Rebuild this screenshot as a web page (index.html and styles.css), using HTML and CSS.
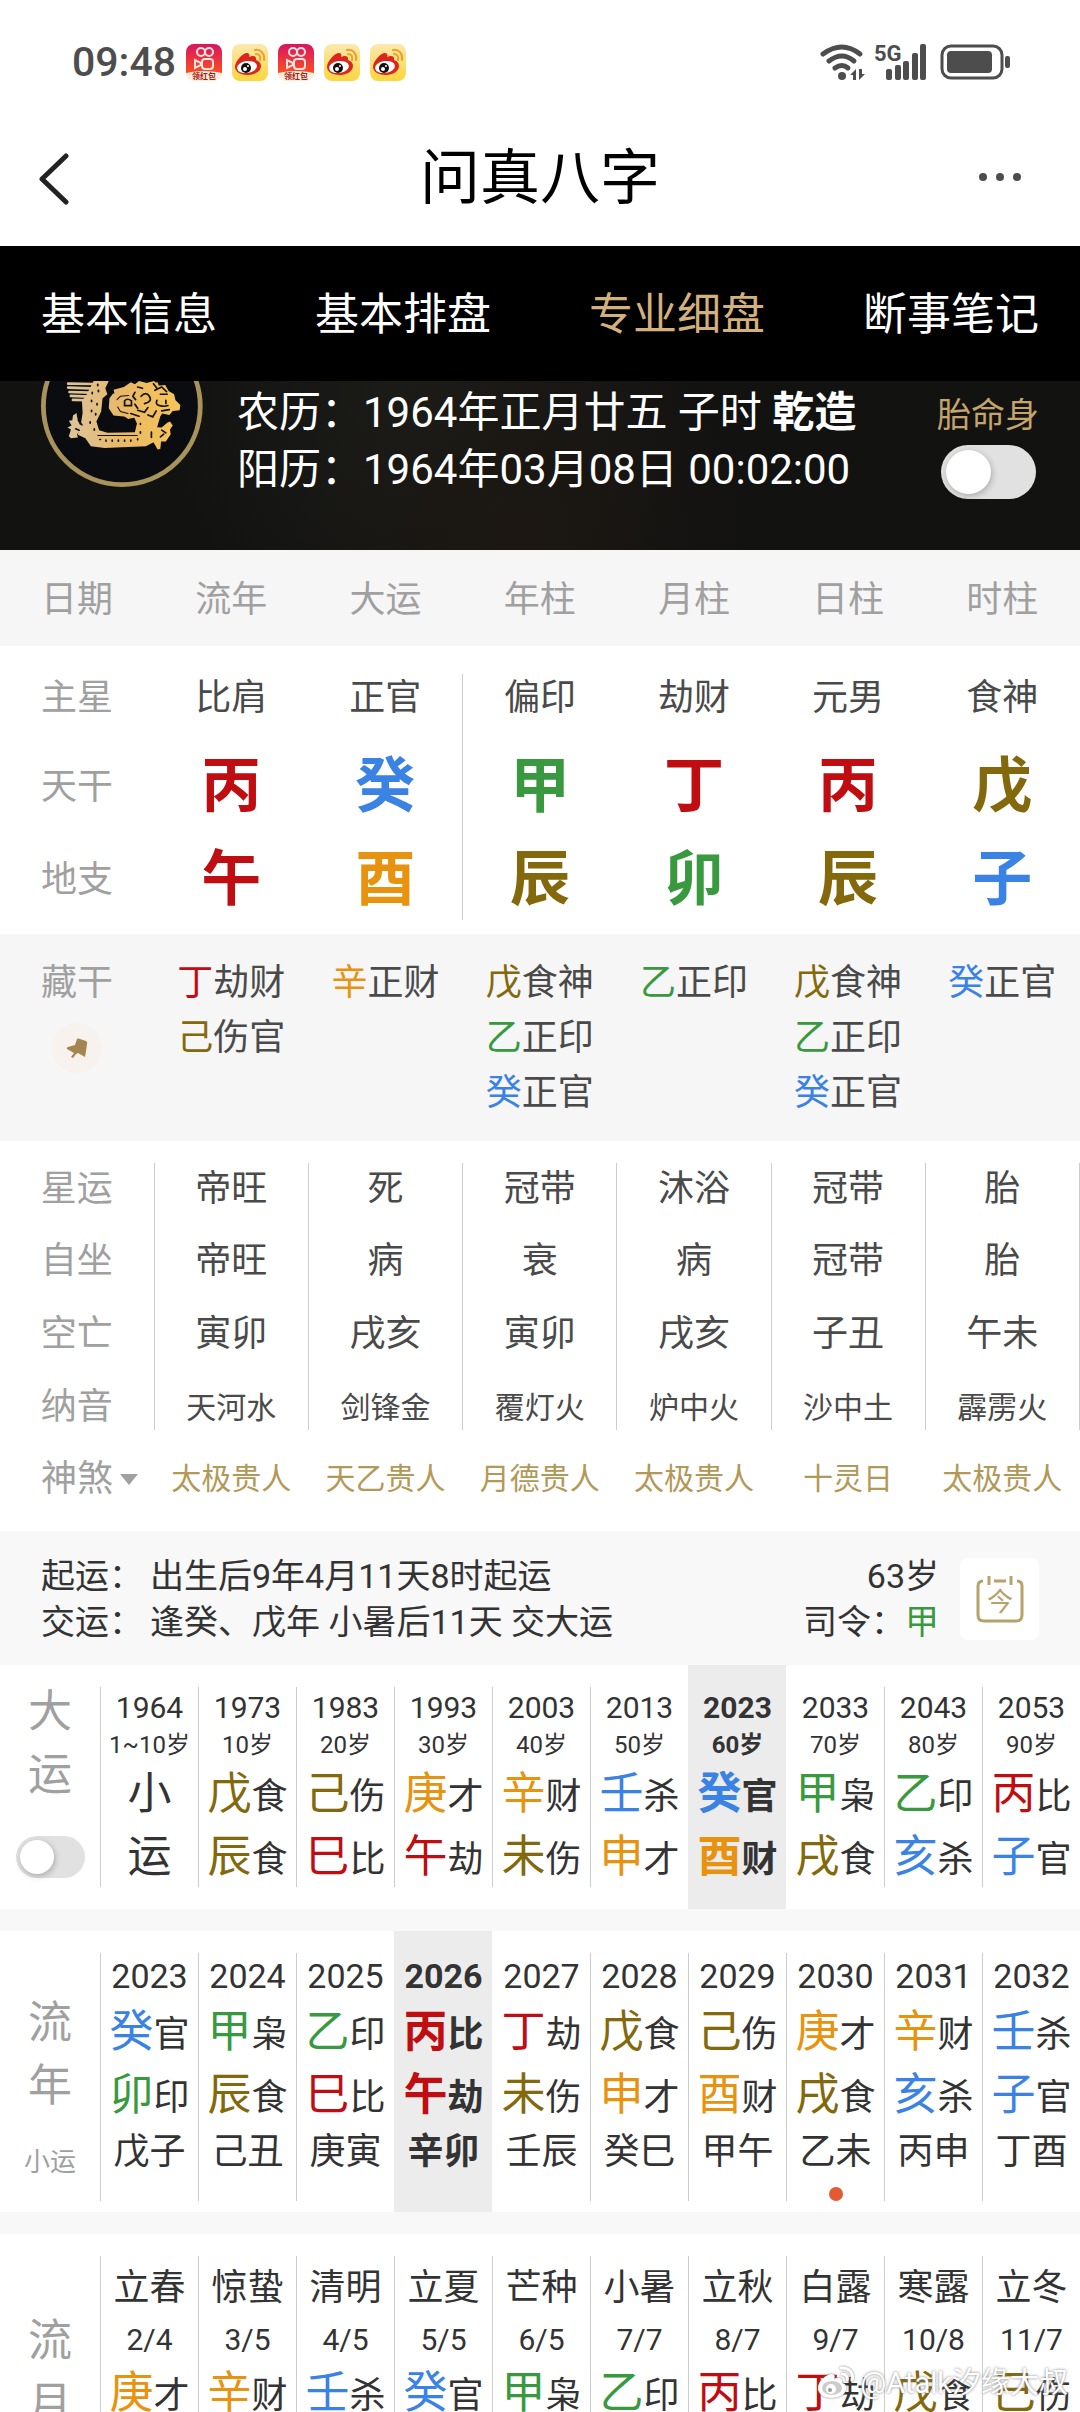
FILE: index.html
```html
<!DOCTYPE html>
<html lang="zh-CN">
<head>
    <meta charset="UTF-8">
    <meta name="viewport" content="width=device-width, initial-scale=1.0">
    <title>问真八字</title>
    <link rel="stylesheet" href="styles.css">
</head>
<body>
    <svg width="0" height="0" class="defs" aria-hidden="true">
        <defs>
            <linearGradient id="ksBg" x1="0" y1="0" x2="0" y2="1">
                <stop offset="0" stop-color="#d81560"/>
                <stop offset="1" stop-color="#fb4f22"/>
            </linearGradient>
            <linearGradient id="wbBg" x1="0" y1="0" x2="0" y2="1">
                <stop offset="0" stop-color="#fbe9ae"/>
                <stop offset="1" stop-color="#fdd53c"/>
            </linearGradient>
            <symbol id="kuaishou" viewBox="0 0 36 37">
                <rect width="36" height="37" rx="8" fill="#fdeedb"/>
                <path d="M0 29V8a8 8 0 0 1 8-8h20a8 8 0 0 1 8 8v21Q18 25 0 29z" fill="url(#ksBg)"/>
                <g fill="none" stroke="#ffe4e0" stroke-width="2">
                    <circle cx="15" cy="8" r="4"/>
                    <circle cx="23" cy="8" r="4"/>
                    <rect x="16" y="15" width="11" height="10" rx="3"/>
                    <path d="M15 19l-6-3v8l6-3z"/>
                </g>
                <text x="18" y="35" class="ks-text">领红包</text>
            </symbol>
            <symbol id="weibo" viewBox="0 0 36 37">
                <rect width="36" height="37" rx="8" fill="url(#wbBg)"/>
                <path d="M3 23c0-6 8-14 12-14 2 0 3 2 2 4 4-2 8-1 7 3 3 1 5 3 5 6 0 5-6 9-13 9S3 28 3 23z" fill="#dc251c"/>
                <ellipse cx="15" cy="23" rx="10" ry="6" fill="#fff" transform="rotate(-8 15 23)"/>
                <circle cx="14" cy="24" r="5" fill="#111"/>
                <circle cx="13" cy="25" r="2" fill="#fff"/>
                <circle cx="16" cy="22" r="1" fill="#fff"/>
                <path d="M23 6c6-1 10 4 9 10M24 10c3 0 5 2 4 6" fill="none" stroke="#eda02b" stroke-width="2" stroke-linecap="round"/>
            </symbol>
        </defs>
    </svg>

    <div class="status">
        <span class="time">09:48</span>
        <div class="apps">
            <svg width="36" height="37"><use href="#kuaishou"/></svg>
            <svg width="36" height="37"><use href="#weibo"/></svg>
            <svg width="36" height="37"><use href="#kuaishou"/></svg>
            <svg width="36" height="37"><use href="#weibo"/></svg>
            <svg width="36" height="37"><use href="#weibo"/></svg>
        </div>
        <svg class="signals" width="190" height="36" viewBox="0 0 190 36">
            <g fill="none" stroke="#4d4d4d" stroke-width="5" stroke-linecap="round">
                <path d="M3 10Q22-4 40 10"/>
                <path d="M9 17Q22 7 34 17"/>
                <path d="M15 24Q22 19 28 24"/>
            </g>
            <circle cx="22" cy="32" r="4" fill="#4d4d4d"/>
            <path d="M30 31l6-6v11h-3v-5zM45 30l-6 6V25h3v5z" fill="#4d4d4d"/>
            <text x="54" y="17" class="net">5G</text>
            <g fill="#4d4d4d">
                <rect x="66" y="25" width="6" height="11" rx="2"/>
                <rect x="75" y="21" width="6" height="15" rx="2"/>
                <rect x="83" y="17" width="6" height="19" rx="2"/>
                <rect x="92" y="9" width="6" height="27" rx="2"/>
                <rect x="100" y="0" width="6" height="36" rx="2"/>
                <rect x="127" y="7" width="45" height="22" rx="4"/>
                <rect x="185" y="12" width="5" height="12" rx="2"/>
            </g>
            <rect x="122" y="2" width="60" height="32" rx="9" fill="none" stroke="#4d4d4d" stroke-width="3"/>
        </svg>
    </div>

    <header class="titlebar">
        <button class="icon-btn" aria-label="返回">
            <svg width="32" height="52" viewBox="0 0 32 52"><path d="M28 3L4 26l24 23" fill="none" stroke="#222" stroke-width="5" stroke-linecap="round" stroke-linejoin="round"/></svg>
        </button>
        <h1>问真八字</h1>
        <button class="icon-btn more-btn" aria-label="更多">
            <svg width="44" height="10" viewBox="0 0 44 10" fill="#4d4d4d"><circle cx="5" cy="5" r="4"/><circle cx="22" cy="5" r="4"/><circle cx="39" cy="5" r="4"/></svg>
        </button>
    </header>

    <nav class="tabs">
        <a href="#info">基本信息</a>
        <a href="#basic">基本排盘</a>
        <a href="#pro" class="current">专业细盘</a>
        <a href="#notes">断事笔记</a>
    </nav>

    <section class="banner">
        <svg class="medal" width="162" height="106" viewBox="119 422 471 319" preserveAspectRatio="none">
            <defs>
                <linearGradient id="gold" x1="190" y1="0" x2="520" y2="0" gradientUnits="userSpaceOnUse">
                    <stop offset="0" stop-color="#dcc5a0"/>
                    <stop offset="0.5" stop-color="#e8b867"/>
                    <stop offset="1" stop-color="#f6c557"/>
                </linearGradient>
            </defs>
            <ellipse cx="354" cy="498" rx="228" ry="236" fill="#0b0c10" stroke="#a8935a" stroke-width="14"/>
            <g fill="none" stroke="url(#gold)" stroke-linecap="round">
                <path d="M198 430l70 1M198 442l66 2M202 455l60 2M206 467l54 2M212 479l46 1" stroke-width="8"/>
            </g>
            <g fill="url(#gold)">
                <!-- back, belly and hind leg -->
                <path d="M272 422h44l-10 22 6 18-14 12-4 40-14 30 8 26 24 8 80-2 6-26-8-18-60-6-14-22 2-30 10-14 30-8 40-16 60-10 20 60-20 70-12 50-22 12-120 6-40-6-16-24-22-10 8-26 6-40-2-36 14-20z"/>
                <!-- head and mane -->
                <path d="M330 448l30-8 20-14 12 6 12-10 22 6 22-6 12 14 20-2 10 18 16 10 4 18 14 14-2 16-20 2-10 12-20-4-12 14-18-4-8 10-16-8-14 10-12-10-20 4-26-20z"/>
                <path d="M262 560l-30-6-6-14-4-22-10 8-2 14-10 2 8 14-12 6 10 6-6 20 6 6 20-2-2-10 10-12 20 4z"/>
                <path d="M430 560l40 2 16-14 8-4 8 12-8 12 2 14-14 22-14 0-2 22-8 2-12-22-20 0z"/>
            </g>
            <g fill="none" stroke="#15120c" stroke-width="5" stroke-linecap="round">
                <path d="M284 432v4M268 456v4M286 450v4M266 480v4M282 490v4M266 510v4M278 520v4M262 545v4M274 566v4M290 598h2M308 600v3M326 600v3M344 600v3M362 600v3M380 600v3M400 596v3M408 575v4M408 550v3"/>
                <path d="M284 586h115M340 478l10-10 24-2M342 500l8 14 22 6" stroke-width="3"/>
                <path d="M410 468q14-16 24 0t-14 22M450 450l20-10 14 14M456 480q-6 12 8 16t24 0M466 462h20M482 480v10M362 482q8-10 20 0v14h-20zM400 510l20 6 10-14M430 524l14 6 10-18M380 520l24 8M446 430l10 14M400 440l14 4M392 456l-6 12 8 10M392 492l8 12M470 512l22-4"/>
                <path d="M228 540l10 14M220 566l10 4M470 570l12 8M466 590l10-8M440 576v16"/>
            </g>
        </svg>
        <div class="birth">
            <p>农历：1964年正月廿五 子时 <b>乾造</b></p>
            <p>阳历：1964年03月08日 00:02:00</p>
        </div>
        <label class="palace">胎命身<input type="checkbox" class="switch"></label>
    </section>

    <table class="pillars">
        <thead>
            <tr><th>日期</th><th>流年</th><th>大运</th><th>年柱</th><th>月柱</th><th>日柱</th><th>时柱</th></tr>
        </thead>
        <tbody class="stems">
            <tr class="star"><th>主星</th><td>比肩</td><td>正官</td><td>偏印</td><td>劫财</td><td>元男</td><td>食神</td></tr>
            <tr class="gan"><th>天干</th><td class="fire">丙</td><td class="water">癸</td><td class="wood">甲</td><td class="fire">丁</td><td class="fire">丙</td><td class="earth">戊</td></tr>
            <tr class="zhi"><th>地支</th><td class="fire">午</td><td class="metal">酉</td><td class="earth">辰</td><td class="wood">卯</td><td class="earth">辰</td><td class="water">子</td></tr>
        </tbody>
        <tbody class="hidden-stems">
            <tr>
                <th>藏干
                    <button class="pin" aria-label="固定">
                        <svg width="22" height="20" viewBox="0 0 22 20" fill="#a5854f"><path d="M11 1q1-1 3 0l6 2q2 1 1 3l-1 7-1 6-7-4-2 1-3 4-2-1 3-4-7-4q-1-1 1-2l7-2z"/></svg>
                    </button>
                </th>
                <td><span class="fire">丁</span>劫财<br><span class="earth">己</span>伤官</td>
                <td><span class="metal">辛</span>正财</td>
                <td><span class="earth">戊</span>食神<br><span class="wood">乙</span>正印<br><span class="water">癸</span>正官</td>
                <td><span class="wood">乙</span>正印</td>
                <td><span class="earth">戊</span>食神<br><span class="wood">乙</span>正印<br><span class="water">癸</span>正官</td>
                <td><span class="water">癸</span>正官</td>
            </tr>
        </tbody>
        <tbody class="details">
            <tr class="first"><th>星运</th><td>帝旺</td><td>死</td><td>冠带</td><td>沐浴</td><td>冠带</td><td>胎</td></tr>
            <tr><th>自坐</th><td>帝旺</td><td>病</td><td>衰</td><td>病</td><td>冠带</td><td>胎</td></tr>
            <tr><th>空亡</th><td>寅卯</td><td>戌亥</td><td>寅卯</td><td>戌亥</td><td>子丑</td><td>午未</td></tr>
            <tr class="nayin"><th>纳音</th><td>天河水</td><td>剑锋金</td><td>覆灯火</td><td>炉中火</td><td>沙中土</td><td>霹雳火</td></tr>
            <tr class="shensha"><th><button class="more">神煞</button></th><td>太极贵人</td><td>天乙贵人</td><td>月德贵人</td><td>太极贵人</td><td>十灵日</td><td>太极贵人</td></tr>
        </tbody>
    </table>

    <section class="summary">
        <dl>
            <div><dt>起运：</dt><dd>出生后9年4月11天8时起运</dd></div>
            <div><dt>交运：</dt><dd>逢癸、戊年 小暑后11天 交大运</dd></div>
        </dl>
        <p class="age">63岁<br>司令：<span class="wood">甲</span></p>
        <button class="today" aria-label="今天">
            <svg width="48" height="48" viewBox="0 0 48 48">
                <path d="M7 6Q2 6 2 11V40Q2 46 8 46H40Q46 46 46 40V11Q46 6 41 6M18 6H30M13 1V10M35 1V10" fill="none" stroke="#b5a36c" stroke-width="3"/>
                <text x="24" y="36">今</text>
            </svg>
        </button>
    </section>

    <section class="luck dayun">
        <div class="side"><span>大</span><span>运</span><input type="checkbox" class="switch small" aria-label="大运"></div>
        <button class="col"><span class="year">1964</span><span class="old">1~10岁</span><span class="gz"><b>小</b></span><span class="gz"><b>运</b></span></button>
        <button class="col"><span class="year">1973</span><span class="old">10岁</span><span class="gz"><b class="earth">戊</b>食</span><span class="gz"><b class="earth">辰</b>食</span></button>
        <button class="col"><span class="year">1983</span><span class="old">20岁</span><span class="gz"><b class="earth">己</b>伤</span><span class="gz"><b class="fire">巳</b>比</span></button>
        <button class="col"><span class="year">1993</span><span class="old">30岁</span><span class="gz"><b class="metal">庚</b>才</span><span class="gz"><b class="fire">午</b>劫</span></button>
        <button class="col"><span class="year">2003</span><span class="old">40岁</span><span class="gz"><b class="metal">辛</b>财</span><span class="gz"><b class="earth">未</b>伤</span></button>
        <button class="col"><span class="year">2013</span><span class="old">50岁</span><span class="gz"><b class="water">壬</b>杀</span><span class="gz"><b class="metal">申</b>才</span></button>
        <button class="col active"><span class="year">2023</span><span class="old">60岁</span><span class="gz"><b class="water">癸</b>官</span><span class="gz"><b class="metal">酉</b>财</span></button>
        <button class="col"><span class="year">2033</span><span class="old">70岁</span><span class="gz"><b class="wood">甲</b>枭</span><span class="gz"><b class="earth">戌</b>食</span></button>
        <button class="col"><span class="year">2043</span><span class="old">80岁</span><span class="gz"><b class="wood">乙</b>印</span><span class="gz"><b class="water">亥</b>杀</span></button>
        <button class="col"><span class="year">2053</span><span class="old">90岁</span><span class="gz"><b class="fire">丙</b>比</span><span class="gz"><b class="water">子</b>官</span></button>
    </section>

    <section class="luck liunian">
        <div class="side"><span>流</span><span>年</span><small>小运</small></div>
        <button class="col"><span class="year">2023</span><span class="gz"><b class="water">癸</b>官</span><span class="gz"><b class="wood">卯</b>印</span><span class="minor">戊子</span></button>
        <button class="col"><span class="year">2024</span><span class="gz"><b class="wood">甲</b>枭</span><span class="gz"><b class="earth">辰</b>食</span><span class="minor">己丑</span></button>
        <button class="col"><span class="year">2025</span><span class="gz"><b class="wood">乙</b>印</span><span class="gz"><b class="fire">巳</b>比</span><span class="minor">庚寅</span></button>
        <button class="col active"><span class="year">2026</span><span class="gz"><b class="fire">丙</b>比</span><span class="gz"><b class="fire">午</b>劫</span><span class="minor">辛卯</span></button>
        <button class="col"><span class="year">2027</span><span class="gz"><b class="fire">丁</b>劫</span><span class="gz"><b class="earth">未</b>伤</span><span class="minor">壬辰</span></button>
        <button class="col"><span class="year">2028</span><span class="gz"><b class="earth">戊</b>食</span><span class="gz"><b class="metal">申</b>才</span><span class="minor">癸巳</span></button>
        <button class="col"><span class="year">2029</span><span class="gz"><b class="earth">己</b>伤</span><span class="gz"><b class="metal">酉</b>财</span><span class="minor">甲午</span></button>
        <button class="col marked"><span class="year">2030</span><span class="gz"><b class="metal">庚</b>才</span><span class="gz"><b class="earth">戌</b>食</span><span class="minor">乙未</span></button>
        <button class="col"><span class="year">2031</span><span class="gz"><b class="metal">辛</b>财</span><span class="gz"><b class="water">亥</b>杀</span><span class="minor">丙申</span></button>
        <button class="col"><span class="year">2032</span><span class="gz"><b class="water">壬</b>杀</span><span class="gz"><b class="water">子</b>官</span><span class="minor">丁酉</span></button>
    </section>

    <section class="luck liuyue">
        <div class="side"><span>流</span><span>月</span></div>
        <button class="col"><span class="term">立春</span><span class="date">2/4</span><span class="gz"><b class="metal">庚</b>才</span></button>
        <button class="col"><span class="term">惊蛰</span><span class="date">3/5</span><span class="gz"><b class="metal">辛</b>财</span></button>
        <button class="col"><span class="term">清明</span><span class="date">4/5</span><span class="gz"><b class="water">壬</b>杀</span></button>
        <button class="col"><span class="term">立夏</span><span class="date">5/5</span><span class="gz"><b class="water">癸</b>官</span></button>
        <button class="col"><span class="term">芒种</span><span class="date">6/5</span><span class="gz"><b class="wood">甲</b>枭</span></button>
        <button class="col"><span class="term">小暑</span><span class="date">7/7</span><span class="gz"><b class="wood">乙</b>印</span></button>
        <button class="col"><span class="term">立秋</span><span class="date">8/7</span><span class="gz"><b class="fire">丙</b>比</span></button>
        <button class="col"><span class="term">白露</span><span class="date">9/7</span><span class="gz"><b class="fire">丁</b>劫</span></button>
        <button class="col"><span class="term">寒露</span><span class="date">10/8</span><span class="gz"><b class="earth">戊</b>食</span></button>
        <button class="col"><span class="term">立冬</span><span class="date">11/7</span><span class="gz"><b class="earth">己</b>伤</span></button>
    </section>

    <div class="watermark">
        <svg width="40" height="34" viewBox="0 0 40 34">
            <path d="M2 22C2 15 11 8 16 8c3 0 3 3 2 5 5-2 9-1 8 4 4 1 5 4 4 7-1 5-8 8-15 8S2 28 2 22z" fill="#fff"/>
            <ellipse cx="16" cy="22" rx="10" ry="7" fill="#aaa" opacity=".6"/>
            <circle cx="15" cy="23" r="5" fill="#fff"/>
            <circle cx="14" cy="24" r="2" fill="#999"/>
            <path d="M25 2c8-1 13 5 11 12M26 8c4 0 6 3 5 6" fill="none" stroke="#fff" stroke-width="3" stroke-linecap="round"/>
        </svg>
        @Atalk汐缘大叔
    </div>
</body>
</html>
```
FILE: styles.css
```css
* {
    box-sizing: border-box;
}
body {
    margin: 0;
    height: 100vh;
    overflow: hidden;
    position: relative;
    background-color: #f8f8f8;
    color: #333;
    font-family: Roboto, "Noto Sans CJK SC", sans-serif;
    font-size: 36px;
}
button {
    margin: 0;
    padding: 0;
    border: none;
    background: none;
    color: inherit;
    font: inherit;
    cursor: pointer;
}
p, h1, dl, dd {
    margin: 0;
}
.defs {
    position: absolute;
}

/* five elements */
.wood { color: #38993f; }
.fire { color: #c00d12; }
.earth { color: #83690c; }
.metal { color: #e7930f; }
.water { color: #3a82e3; }

/* status bar */
.status {
    display: flex;
    align-items: center;
    height: 124px;
    padding: 0 70px 0 72px;
    background-color: #fff;
}
.time {
    width: 114px;
    color: #4d4d4d;
    font-size: 41px;
    font-weight: 500;
}
.apps {
    display: flex;
    gap: 10px;
    margin-right: auto;
}
.ks-text {
    font-size: 8px;
    font-weight: bold;
    fill: #a3201a;
    text-anchor: middle;
}
.signals {
    overflow: visible;
}
.net {
    font-size: 22px;
    font-weight: bold;
    fill: #4d4d4d;
}

/* title */
.titlebar {
    display: flex;
    justify-content: space-between;
    align-items: center;
    height: 122px;
    padding: 0 38px 12px;
    background-color: #fff;
    color: #000;
}
.titlebar h1 {
    font-size: 60px;
    font-weight: normal;
    line-height: 80px;
}
.icon-btn {
    display: flex;
    width: 64px;
}
.more-btn {
    padding-bottom: 4px;
}

/* tabs */
.tabs {
    display: flex;
    justify-content: space-between;
    padding: 4px 41px 0;
    background-color: #000;
    line-height: 131px;
    font-size: 44px;
}
.tabs a {
    color: #fff;
    text-decoration: none;
}
.tabs .current {
    color: #d3b07c;
}

.banner {
    display: flex;
    height: 169px;
    padding: 0 41px;
    background-color: #121211;
    background-image: radial-gradient(circle at 48% 90%, #1c1712, transparent 40%), radial-gradient(circle at 40% 20%, #1c1d19, transparent 40%);
    color: #fff;
}
.birth {
    flex: 1;
    padding: 3px 0 0 34px;
    font-size: 42px;
    line-height: 57px;
    white-space: nowrap;
}
.palace {
    display: flex;
    flex-direction: column;
    align-items: center;
    gap: 7px;
    padding-top: 12px;
    color: #c5a46d;
    font-size: 34px;
    line-height: 45px;
}
.switch {
    appearance: none;
    width: 95px;
    height: 54px;
    margin: 0;
    padding: 5px;
    border-radius: 27px;
    background-color: #e2e1e2;
}
.switch::before {
    content: "";
    display: block;
    width: 45px;
    height: 44px;
    border-radius: 50%;
    background-color: #fff;
    box-shadow: 1px 2px 6px rgba(0, 0, 0, 0.25);
}
.switch:checked {
    background-color: #d3b07c;
}
.switch.small {
    width: 69px;
    height: 42px;
    padding: 4px;
}
.switch.small::before {
    width: 34px;
    height: 34px;
}

/* pillars */
.pillars {
    width: 100%;
    table-layout: fixed;
    border-collapse: collapse;
    background-color: #fff;
    color: #4a4a4a;
    text-align: center;
}
.pillars th, .pillars td {
    padding: 0;
    vertical-align: top;
    font-weight: normal;
    white-space: nowrap;
}
.pillars th {
    color: #a0a0a0;
}
.pillars thead, .hidden-stems {
    background-color: #f6f6f6;
}
.pillars thead th {
    padding-top: 5px;
    line-height: 91px;
}
.stems::before {
    content: "";
    display: block;
    height: 28px;
}
.stems::after {
    content: "";
    display: block;
    height: 14px;
}
.details::before {
    content: "";
    display: block;
    height: 22px;
}
.stems tr > :nth-child(3), .details td, .details th {
    border-right: 1px solid #ccc;
}
.pillars .star > * {
    padding-bottom: 18px;
    line-height: 48px;
}
.pillars .gan > * {
    padding: 17px 0;
    line-height: 60px;
}
.pillars .zhi > * {
    padding: 16px 0 10px;
    line-height: 60px;
}
.pillars .gan td, .pillars .zhi td {
    font-size: 60px;
    font-weight: bold;
}
.pillars .hidden-stems th, .pillars .hidden-stems td {
    padding: 22px 0 20px;
    line-height: 55px;
}
.pin {
    display: flex;
    align-items: center;
    justify-content: center;
    width: 50px;
    height: 50px;
    margin: 12px auto 0;
    border-radius: 50%;
    background-color: #f7f2ed;
}
.details tr > * {
    line-height: 73px;
}
.pillars .details .first > * {
    padding-bottom: 10px;
    line-height: 52px;
}
.pillars .details .nayin > * {
    padding-top: 14px;
    line-height: 45px;
}
.pillars .details .shensha > * {
    padding: 26px 0 29px;
    border-right: none;
    line-height: 46px;
}
.nayin td, .shensha td {
    font-size: 30px;
}
.shensha td {
    color: #b29958;
}
.more {
    position: relative;
}
.more::after {
    content: "";
    position: absolute;
    top: 18px;
    left: 100%;
    margin-left: 7px;
    border: 9px solid transparent;
    border-top: 11px solid #a0a0a0;
    border-bottom: none;
}

/* summary */
.summary {
    display: flex;
    align-items: center;
    gap: 21px;
    padding: 22px 41px 20px;
    font-size: 34px;
    line-height: 46px;
}
.summary dl {
    flex: 1;
}
.summary dl div {
    display: flex;
    gap: 7px;
}
.age {
    text-align: right;
}
.today {
    display: flex;
    align-items: center;
    justify-content: center;
    width: 79px;
    height: 82px;
    border-radius: 8px;
    background-color: #fff;
}
.today text {
    font-size: 26px;
    fill: #b5a36c;
    text-anchor: middle;
}

/* luck grids */
.luck {
    display: grid;
    grid-template-columns: 100px repeat(10, 1fr);
    margin-bottom: 22px;
    background-color: #fff;
}
.side {
    display: flex;
    flex-direction: column;
    align-items: center;
    color: #a0a0a0;
    font-size: 44px;
    line-height: 63px;
}
.side small {
    margin-top: 28px;
    font-size: 26px;
    line-height: 32px;
}
.side .switch {
    margin-top: 29px;
}
.dayun .side { padding-top: 16px; }
.liunian .side { padding-top: 61px; }
.liuyue .side { padding-top: 76px; }
.col {
    position: relative;
    margin: 22px 0;
    border-left: 1px solid #ccc;
    white-space: nowrap;
}
.col span {
    display: block;
}
.col.active {
    margin: 0;
    padding: 22px 0;
    border-left-color: #ececec;
    background-color: #ececec;
    font-weight: bold;
}
.active + .col {
    border-left-color: transparent;
}
.year {
    font-size: 30px;
    line-height: 42px;
}
.old {
    font-size: 24px;
    line-height: 32px;
}
.gz {
    height: 63px;
    line-height: 66px;
}
.gz b {
    font-size: 44px;
    font-weight: normal;
}
.active .gz b {
    font-weight: bold;
}
.liunian .col {
    margin-bottom: 11px;
    padding-bottom: 24px;
}
.liunian .col.active {
    margin-bottom: 0;
    padding-bottom: 35px;
}
.liunian .year {
    font-size: 34px;
    line-height: 46px;
}
.minor {
    height: 52px;
    line-height: 54px;
}
.marked::after {
    content: "";
    position: absolute;
    bottom: 0;
    left: 50%;
    width: 14px;
    height: 14px;
    margin-left: -7px;
    border-radius: 50%;
    background-color: #e25b33;
}
.term {
    line-height: 64px;
}
.date {
    font-size: 30px;
    line-height: 40px;
}

.watermark {
    position: absolute;
    right: 12px;
    bottom: 10px;
    display: flex;
    align-items: center;
    gap: 4px;
    color: #fff;
    font-size: 29px;
    line-height: 38px;
    text-shadow: 0 0 3px #777;
}
.watermark svg {
    filter: drop-shadow(0 0 1px #777);
}
```
